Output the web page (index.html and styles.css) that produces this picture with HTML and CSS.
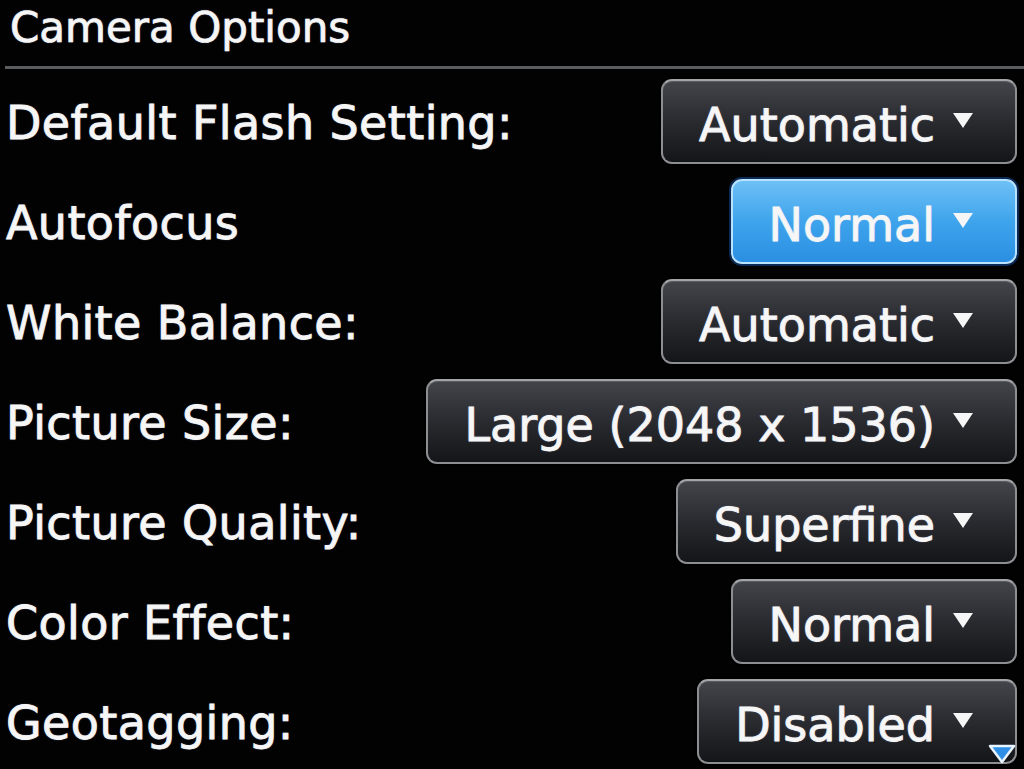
FILE: index.html
```html
<!DOCTYPE html>
<html lang="en">
<head>
<meta charset="utf-8">
<title>Camera Options</title>
<link rel="stylesheet" href="styles.css">
</head>
<body>
<div class="screen">
  <header class="title">Camera Options</header>
  <div class="rule"></div>
  <div class="options">
    <div class="row">
      <span class="label">Default Flash Setting:</span>
      <span class="choice">Automatic<span class="arrow"></span></span>
    </div>
    <div class="row">
      <span class="label">Autofocus</span>
      <span class="choice focused">Normal<span class="arrow"></span></span>
    </div>
    <div class="row">
      <span class="label">White Balance:</span>
      <span class="choice">Automatic<span class="arrow"></span></span>
    </div>
    <div class="row">
      <span class="label">Picture Size:</span>
      <span class="choice">Large (2048 x 1536)<span class="arrow"></span></span>
    </div>
    <div class="row">
      <span class="label">Picture Quality:</span>
      <span class="choice">Superfine<span class="arrow"></span></span>
    </div>
    <div class="row">
      <span class="label">Color Effect:</span>
      <span class="choice">Normal<span class="arrow"></span></span>
    </div>
    <div class="row">
      <span class="label">Geotagging:</span>
      <span class="choice">Disabled<span class="arrow"></span></span>
    </div>
  </div>
  <svg class="scroll-more" width="28" height="20" viewBox="0 0 28 20">
    <polygon points="2,2 26,2 14,18" fill="#2f8ee6" stroke="#e8f4ff" stroke-width="2.5" stroke-linejoin="round"/>
  </svg>
</div>
</body>
</html>
```

FILE: styles.css
```css
html, body {
  margin: 0;
  padding: 0;
  background: #000;
}

.screen {
  position: relative;
  width: 1024px;
  height: 769px;
  overflow: hidden;
  background: #020203;
  color: #f6f6f6;
  font-family: "DejaVu Sans", "Liberation Sans", sans-serif;
}

.title {
  font-size: 42px;
  line-height: 42px;
  height: 60px;
  padding: 7px 0 0 10px;
  box-sizing: border-box;
  -webkit-text-stroke: 0.7px #f6f6f6;
  text-shadow: 0 0 2px rgba(200, 210, 255, 0.5);
}

.rule {
  height: 3px;
  margin: 6px 0 0 5px;
  background: #5b5c5e;
}

.options {
  display: flex;
  flex-direction: column;
  gap: 15px;
  padding: 10px 7px 0 6px;
}

.row {
  display: flex;
  align-items: center;
  justify-content: space-between;
  height: 85px;
}

.label {
  font-size: 46px;
  line-height: 46px;
  padding-top: 2px;
  letter-spacing: 0.4px;
  -webkit-text-stroke: 0.8px #f6f6f6;
  text-shadow: 0 0 2px rgba(200, 210, 255, 0.5);
  white-space: nowrap;
}

.choice {
  display: flex;
  align-items: center;
  height: 85px;
  box-sizing: border-box;
  padding: 6px 42px 0 36px;
  font-size: 46px;
  line-height: 46px;
  white-space: nowrap;
  -webkit-text-stroke: 0.8px #f6f6f6;
  border: 2px solid #8d8e92;
  border-top-color: #a4a5a9;
  border-radius: 11px;
  background: linear-gradient(#43454a 0%, #2c2d32 45%, #141518 100%);
  box-shadow: 0 0 0 2px #000, inset 0 1px 0 rgba(255, 255, 255, 0.12);
  text-shadow: 0 0 2px rgba(200, 210, 255, 0.5);
}

.choice.focused {
  border-color: #b9e2ff;
  background: linear-gradient(#6ec0f6 0%, #3ea4ec 50%, #2b8fe2 100%);
  box-shadow: 0 0 0 2px #0a2a55;
}

.arrow {
  width: 0;
  height: 0;
  margin-left: 18px;
  margin-top: -8px;
  border-left: 10px solid transparent;
  border-right: 10px solid transparent;
  border-top: 15px solid #f6f6f6;
}

.scroll-more {
  position: absolute;
  right: 8px;
  bottom: 5px;
}
```
